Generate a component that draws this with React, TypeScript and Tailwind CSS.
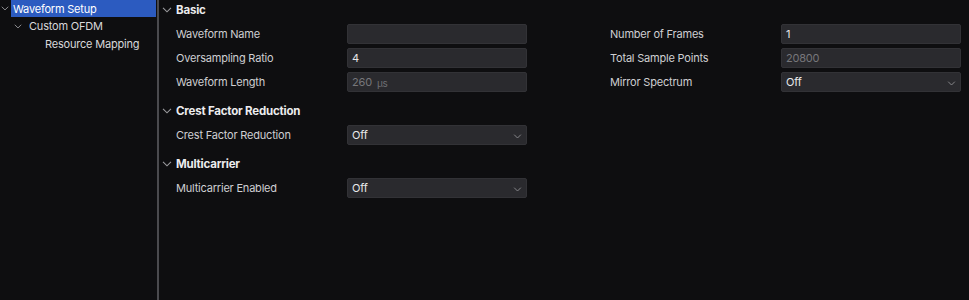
import { type ReactNode } from "react";

function Chevron({ className = "" }: { className?: string }) {
    return (
        <svg viewBox="0 0 10 6" className={className} fill="none" stroke="currentColor" strokeWidth="1.1">
            <path d="M1 0.8 L5 4.8 L9 0.8" />
        </svg>
    );
}

interface FieldProps {
    label: string;
    value?: string;
    unit?: string;
    muted?: boolean;
    select?: boolean;
}

function Field({ label, value = "", unit, muted, select }: FieldProps) {
    return (
        <div className="flex items-center h-[20px]">
            <div className="w-[171px] text-[#cfcfd2] pt-[1px]">{label}</div>
            <div className="relative w-[180px] h-[20px] bg-[#2a2a2e] border border-[#323236] rounded-[2px] flex items-center pl-[4px] pt-[1px]">
                <span className={muted ? "text-[#77777b]" : "text-[#e8e8ea]"}>{value}</span>
                {unit && <span className="ml-[5px] text-[#6f6f73] text-[10px]">µs</span>}
                {select && <Chevron className="absolute right-[4px] top-[8px] w-[9px] h-[5px] text-[#8e8e92]" />}
            </div>
        </div>
    );
}

function Section({ title, children }: { title: string; children: ReactNode }) {
    return (
        <section>
            <div className="flex items-center h-[18px]">
                <Chevron className="ml-[3px] mt-[2px] w-[10px] h-[6px] text-[#9a9a9e]" />
                <span className="ml-[4px] pt-[3px] font-bold text-[#ececee] text-[11.5px]">{title}</span>
            </div>
            <div className="mt-[6px] pl-[17px] flex flex-col gap-[4px]">{children}</div>
        </section>
    );
}

export default function App() {
    return (
        <div className="flex h-[300px] w-[969px] bg-[#0e0e10] font-['Inter',sans-serif] text-[11px] tracking-[-0.2px] leading-none overflow-hidden">
            <aside className="w-[159px] shrink-0 border-r-2 border-[#4a4a4e] text-[#d8d8da]">
                <div className="flex items-center h-[17px] pr-[1px]">
                    <Chevron className="ml-[1px] w-[8px] h-[5px] text-[#a0a0a4]" />
                    <div className="ml-[2px] flex-1 h-full bg-[#2c5bc0] text-white flex items-center pl-[2px] pt-[1px]">Waveform Setup</div>
                </div>
                <div className="flex items-center h-[18px] pt-[1px]">
                    <Chevron className="ml-[14px] w-[8px] h-[5px] text-[#a0a0a4]" />
                    <span className="ml-[7px]">Custom OFDM</span>
                </div>
                <div className="flex items-center h-[18px] pl-[45px] pt-[1px]">Resource Mapping</div>
            </aside>
            <main className="flex-1 flex flex-col gap-[9px]">
                <div className="flex">
                    <Section title="Basic">
                        <Field label="Waveform Name" />
                        <Field label="Oversampling Ratio" value="4" />
                        <Field label="Waveform Length" value="260" unit="us" muted />
                    </Section>
                    <div className="ml-[83px] mt-[24px] flex flex-col gap-[4px]">
                        <Field label="Number of Frames" value="1" />
                        <Field label="Total Sample Points" value="20800" muted />
                        <Field label="Mirror Spectrum" value="Off" select />
                    </div>
                </div>
                <Section title="Crest Factor Reduction">
                    <Field label="Crest Factor Reduction" value="Off" select />
                </Section>
                <Section title="Multicarrier">
                    <Field label="Multicarrier Enabled" value="Off" select />
                </Section>
            </main>
        </div>
    );
}
